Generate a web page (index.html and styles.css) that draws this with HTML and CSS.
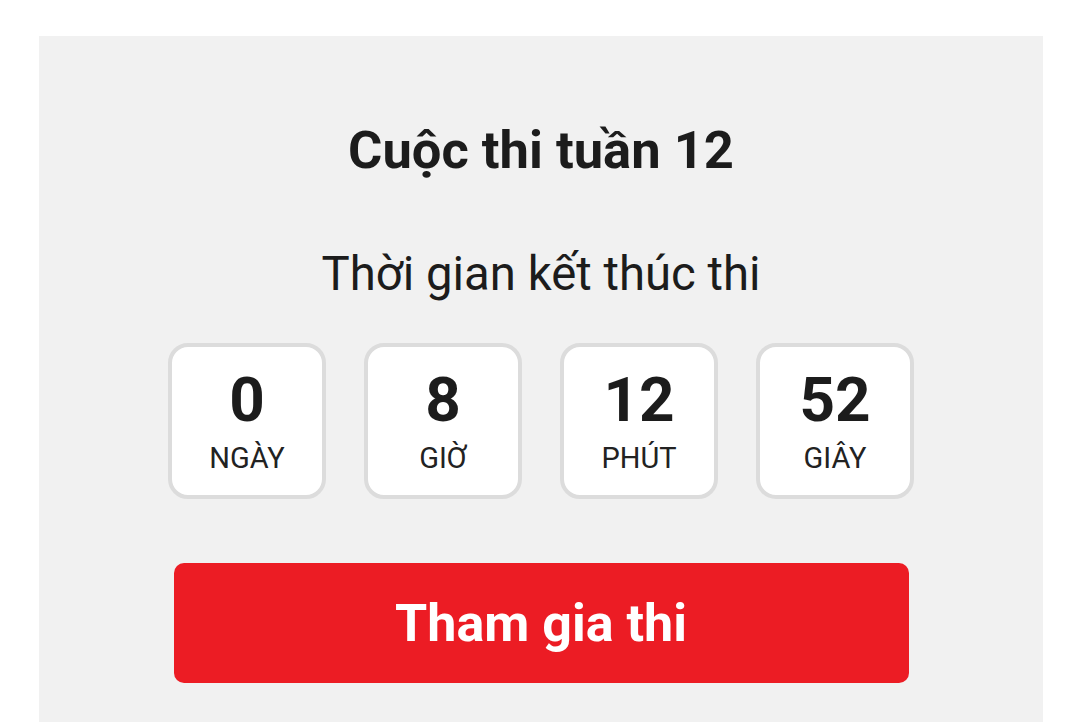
FILE: index.html
```html
<!DOCTYPE html>
<html lang="vi">
<head>
    <meta charset="UTF-8">
    <meta name="viewport" content="width=device-width, initial-scale=1.0">
    <title>Cuộc thi tuần 12</title>
    <link rel="stylesheet" href="styles.css">
</head>
<body>

    <div class="contest">
        <h1 class="contest-title">Cuộc thi tuần 12</h1>
        <p class="contest-sub">Thời gian kết thúc thi</p>

        <div class="countdown">
            <div class="count-box">
                <span class="count-num" id="days">0</span>
                <span class="count-label">NGÀY</span>
            </div>
            <div class="count-box">
                <span class="count-num" id="hours">8</span>
                <span class="count-label">GIỜ</span>
            </div>
            <div class="count-box">
                <span class="count-num" id="minutes">12</span>
                <span class="count-label">PHÚT</span>
            </div>
            <div class="count-box">
                <span class="count-num" id="seconds">52</span>
                <span class="count-label">GIÂY</span>
            </div>
        </div>

        <button class="join-btn">Tham gia thi</button>
    </div>

</body>
</html>
```

FILE: styles.css
```css
body {
    font-family: Roboto, "Liberation Sans", Arial, sans-serif;
    background-color: #fff;
    color: #1c1c1c;
    margin: 0;
    padding: 0;
}
.contest {
    margin: 36px 37px 0 39px;
    min-height: calc(100vh - 36px);
    box-sizing: border-box;
    padding-top: 83px;
    background-color: #f1f1f1;
    display: flex;
    flex-direction: column;
    align-items: center;
}
.contest-title {
    margin: 0;
    font-size: 52.5px;
    line-height: 62px;
    font-weight: 700;
}
.contest-sub {
    margin: 66px 0 0;
    font-size: 47.3px;
    line-height: 54px;
    font-weight: 400;
}
.countdown {
    display: flex;
    gap: 38px;
    margin-top: 42px;
}
.count-box {
    width: 150px;
    height: 126px;
    padding-top: 22px;
    background-color: #fff;
    border: 4px solid #dcdcdc;
    border-radius: 20px;
    display: flex;
    flex-direction: column;
    align-items: center;
}
.count-num {
    font-size: 62px;
    line-height: 62px;
    font-weight: 700;
}
.count-label {
    margin-top: 10px;
    font-size: 29px;
    line-height: 34px;
    color: #222;
}
.join-btn {
    margin-top: 64px;
    width: 735px;
    height: 120px;
    background-color: #ec1c24;
    color: #fff;
    border: none;
    border-radius: 10px;
    font-family: inherit;
    font-size: 52px;
    font-weight: 700;
    cursor: pointer;
}
```
